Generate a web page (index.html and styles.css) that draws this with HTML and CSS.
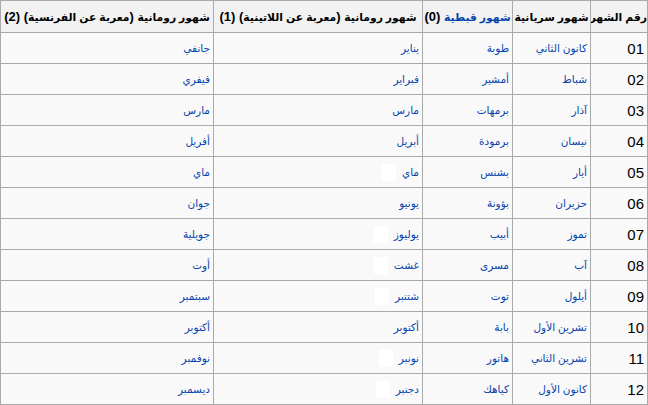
FILE: index.html
```html
<!DOCTYPE html>
<html lang="ar" dir="rtl">
<head>
<meta charset="utf-8">
<link rel="stylesheet" href="styles.css">
</head>
<body>
<table class="wikitable">
<colgroup>
<col class="c-num"><col class="c-syr"><col class="c-copt"><col class="c-lat"><col class="c-fr">
</colgroup>
<thead>
<tr>
<th><span class="ar">رقم الشهر</span></th>
<th><span class="ar">شهور سريانية</span></th>
<th><a class="hlink ar">شهور قبطية</a> (0)</th>
<th><span class="ar">شهور رومانية</span> (<span class="ar">معربة عن اللاتينية</span>) (1)</th>
<th><span class="ar">شهور رومانية</span> (<span class="ar">معربة عن الفرنسية</span>) (2)</th>
</tr>
</thead>
<tbody>
<tr><td class="num">01</td><td><a>كانون الثاني</a></td><td><a>طوبة</a></td><td><a>يناير</a></td><td><a>جانفي</a></td></tr>
<tr><td class="num">02</td><td><a>شباط</a></td><td><a>أمشير</a></td><td><a>فبراير</a></td><td><a>فيفري</a></td></tr>
<tr><td class="num">03</td><td><a>آذار</a></td><td><a>برمهات</a></td><td><a>مارس</a></td><td><a>مارس</a></td></tr>
<tr><td class="num">04</td><td><a>نيسان</a></td><td><a>برمودة</a></td><td><a>أبريل</a></td><td><a>أفريل</a></td></tr>
<tr><td class="num">05</td><td><a>أيار</a></td><td><a>بشنس</a></td><td><a>ماي</a><span class="blot"></span></td><td><a>ماي</a></td></tr>
<tr><td class="num">06</td><td><a>حزيران</a></td><td><a>بؤونة</a></td><td><a>يونيو</a></td><td><a>جوان</a></td></tr>
<tr><td class="num">07</td><td><a>تموز</a></td><td><a>أبيب</a></td><td><a>يوليوز</a><span class="blot"></span></td><td><a>جويلية</a></td></tr>
<tr><td class="num">08</td><td><a>آب</a></td><td><a>مسرى</a></td><td><a>غشت</a><span class="blot"></span></td><td><a>أوت</a></td></tr>
<tr><td class="num">09</td><td><a>أيلول</a></td><td><a>توت</a></td><td><a>شتنبر</a><span class="blot"></span></td><td><a>سبتمبر</a></td></tr>
<tr><td class="num">10</td><td><a>تشرين الأول</a></td><td><a>بابة</a></td><td><a>أكتوبر</a></td><td><a>أكتوبر</a></td></tr>
<tr><td class="num">11</td><td><a>تشرين الثاني</a></td><td><a>هاتور</a></td><td><a>نونبر</a><span class="blot"></span></td><td><a>نوفمبر</a></td></tr>
<tr><td class="num">12</td><td><a>كانون الأول</a></td><td><a>كياهك</a></td><td><a>دجنبر</a><span class="blot"></span></td><td><a>ديسمبر</a></td></tr>
</tbody>
</table>
</body>
</html>
```
FILE: styles.css
```css
html, body {
  margin: 0;
  padding: 0;
  background: #ffffff;
}
body {
  font-family: "Liberation Sans", "DejaVu Sans", sans-serif;
  color: #000;
}
.wikitable {
  border-collapse: collapse;
  table-layout: fixed;
  width: 647px;
  background: #f9f9f9;
  border: 1px solid #aaaaaa;
  font-size: 14px;
}
.c-num { width: 57px; }
.c-syr { width: 78px; }
.c-copt { width: 90px; }
.c-lat { width: 209px; }
.c-fr { width: 213px; }
.wikitable th,
.wikitable td {
  border: 1px solid #aaaaaa;
  padding: 0 3px;
  vertical-align: middle;
  white-space: nowrap;
  overflow: hidden;
}
.wikitable th {
  background: #f2f2f2;
  height: 31px;
  font-weight: bold;
  font-size: 13px;
  text-align: center;
  padding: 0;
}
.wikitable th .ar {
  font-size: 10.8px;
}
.wikitable td {
  height: 30px;
  text-align: right;
  font-size: 10.5px;
}
.wikitable td.num {
  font-size: 15px;
  padding-right: 3px;
}
.wikitable a {
  color: #0645ad;
  text-decoration: none;
}
.wikitable th a.hlink {
  color: #0645ad;
}
.blot {
  display: inline-block;
  width: 14px;
  height: 17px;
  background: #ffffff;
  margin-right: 6px;
  vertical-align: -5px;
}
```
